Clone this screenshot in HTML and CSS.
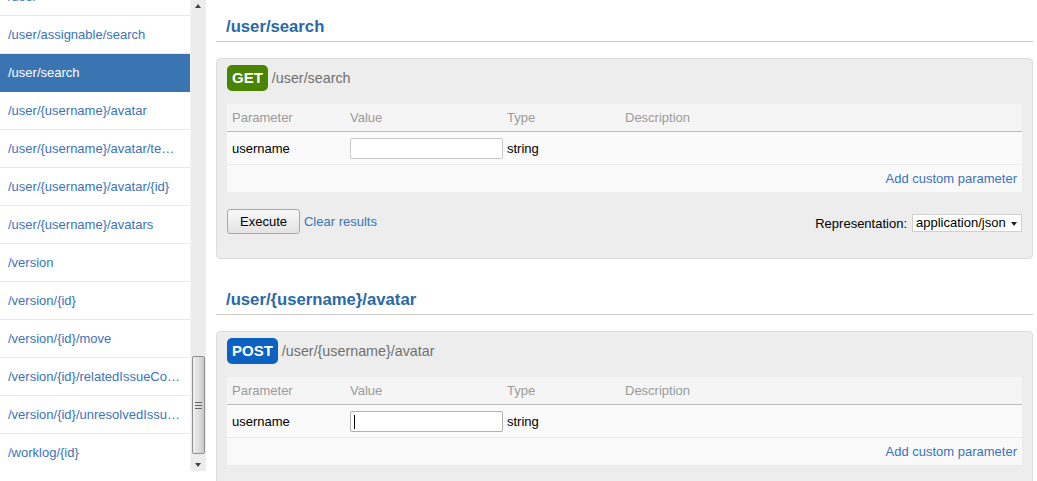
FILE: index.html
```html
<!DOCTYPE html>
<html>
<head>
<meta charset="utf-8">
<title>REST API Browser</title>
<link rel="stylesheet" href="styles.css">
</head>
<body>
<div class="page">
  <aside class="sidebar">
    <nav class="nav">
      <ul class="nav-list">
        <li class="nav-item"><a href="#">/user</a></li>
        <li class="nav-item"><a href="#">/user/assignable/search</a></li>
        <li class="nav-item is-selected"><a href="#">/user/search</a></li>
        <li class="nav-item"><a href="#">/user/{username}/avatar</a></li>
        <li class="nav-item"><a href="#">/user/{username}/avatar/temporary</a></li>
        <li class="nav-item"><a href="#">/user/{username}/avatar/{id}</a></li>
        <li class="nav-item"><a href="#">/user/{username}/avatars</a></li>
        <li class="nav-item"><a href="#">/version</a></li>
        <li class="nav-item"><a href="#">/version/{id}</a></li>
        <li class="nav-item"><a href="#">/version/{id}/move</a></li>
        <li class="nav-item"><a href="#">/version/{id}/relatedIssueCounts</a></li>
        <li class="nav-item"><a href="#">/version/{id}/unresolvedIssueCount</a></li>
        <li class="nav-item"><a href="#">/worklog/{id}</a></li>
      </ul>
    </nav>
    <div class="scrollbar">
      <div class="sb-arrow sb-up"></div>
      <div class="sb-track">
        <div class="sb-thumb"><span class="grip"></span></div>
      </div>
      <div class="sb-arrow sb-down"></div>
    </div>
  </aside>

  <main class="main">
    <section class="resource">
      <h2 class="resource-title">/user/search</h2>
      <div class="method-panel">
        <div class="method-head">
          <span class="badge badge-get">GET</span>
          <span class="method-path">/user/search</span>
        </div>
        <div class="params">
          <div class="prow prow-head">
            <div class="cell">Parameter</div>
            <div class="cell">Value</div>
            <div class="cell">Type</div>
            <div class="cell">Description</div>
          </div>
          <div class="prow prow-param">
            <div class="cell">username</div>
            <div class="cell"><input class="text-input" type="text"></div>
            <div class="cell">string</div>
            <div class="cell"></div>
          </div>
          <div class="prow-custom"><a href="#">Add custom parameter</a></div>
        </div>
        <div class="actions">
          <button class="btn" type="button">Execute</button>
          <a class="clear-link" href="#">Clear results</a>
          <div class="repr">
            <span class="repr-label">Representation:</span>
            <span class="select">application/json</span>
          </div>
        </div>
      </div>
    </section>

    <section class="resource resource-next">
      <h2 class="resource-title">/user/{username}/avatar</h2>
      <div class="method-panel">
        <div class="method-head">
          <span class="badge badge-post">POST</span>
          <span class="method-path">/user/{username}/avatar</span>
        </div>
        <div class="params">
          <div class="prow prow-head">
            <div class="cell">Parameter</div>
            <div class="cell">Value</div>
            <div class="cell">Type</div>
            <div class="cell">Description</div>
          </div>
          <div class="prow prow-param">
            <div class="cell">username</div>
            <div class="cell"><span class="text-input focused"><span class="caret"></span></span></div>
            <div class="cell">string</div>
            <div class="cell"></div>
          </div>
          <div class="prow-custom"><a href="#">Add custom parameter</a></div>
        </div>
        <div class="actions">
          <button class="btn" type="button">Execute</button>
          <a class="clear-link" href="#">Clear results</a>
        </div>
      </div>
    </section>
  </main>
</div>
</body>
</html>
```

FILE: styles.css
```css
html, body {
  margin: 0;
  padding: 0;
  height: 481px;
  overflow: hidden;
  background: #ffffff;
  font-family: "Liberation Sans", Arial, sans-serif;
  font-size: 13px;
  color: #000;
}

a {
  color: #3b73b9;
  text-decoration: none;
}

.page {
  display: flex;
  align-items: flex-start;
}

/* Sidebar */
.sidebar {
  display: flex;
  width: 206px;
  height: 471px;
  flex: none;
}

.nav {
  width: 190px;
  height: 471px;
  overflow: hidden;
}

.nav-list {
  list-style: none;
  margin: -22px 0 0 0;
  padding: 0;
}

.nav-item {
  height: 37px;
  border-bottom: 1px solid #e9e9e9;
}

.nav-item a {
  display: block;
  height: 37px;
  line-height: 37px;
  padding: 0 8px 0 8px;
  white-space: nowrap;
  overflow: hidden;
  text-overflow: ellipsis;
  color: #3b73b9;
}

.nav-item.is-selected {
  background: #3b75b1;
  border-bottom-color: #3b75b1;
}

.nav-item.is-selected a {
  color: #ffffff;
}

/* Fake scrollbar */
.scrollbar {
  width: 16px;
  height: 471px;
  background: #ececec;
  border-left: 1px solid #f4f4f4;
  box-sizing: border-box;
  display: flex;
  flex-direction: column;
}

.sb-arrow {
  height: 17px;
  flex: none;
  position: relative;
}

.sb-up::after,
.sb-down::after {
  content: "";
  position: absolute;
  left: 4px;
  width: 0;
  height: 0;
  border-left: 3.5px solid transparent;
  border-right: 3.5px solid transparent;
}

.sb-up::after {
  top: 4px;
  border-bottom: 4px solid #444;
}

.sb-down::after {
  bottom: 4px;
  border-top: 4px solid #444;
}

.sb-track {
  flex: 1;
  display: flex;
  flex-direction: column;
  justify-content: flex-end;
}

.sb-thumb {
  height: 98px;
  margin: 0 0 0 1px;
  width: 13px;
  box-sizing: border-box;
  border: 1px solid #8f8f8f;
  border-radius: 2px;
  background: linear-gradient(to right, #f0f0f0, #dadada 60%, #c9c9c9);
  display: flex;
  align-items: center;
  justify-content: center;
}

.grip {
  width: 7px;
  height: 5px;
  border-top: 1px solid #666;
  border-bottom: 1px solid #666;
  position: relative;
}

.grip::after {
  content: "";
  position: absolute;
  left: 0;
  right: 0;
  top: 2px;
  border-top: 1px solid #666;
}

/* Main */
.main {
  flex: 1;
  margin: 0 4px 0 10px;
  padding-top: 16px;
}

.resource-next {
  margin-top: 30px;
}

.resource-title {
  margin: 0;
  padding: 1px 10px 4px;
  font-size: 16.7px;
  line-height: 20px;
  font-weight: bold;
  color: #2a68a7;
  border-bottom: 1px solid #cccccc;
}

.method-panel {
  margin-top: 16px;
  background: #ededed;
  border: 1px solid #dcdcdc;
  border-radius: 4px;
  padding: 6px 10px 24px;
}

.method-head {
  display: flex;
  align-items: center;
  height: 26px;
}

.badge {
  display: inline-block;
  height: 26px;
  line-height: 26px;
  padding: 0 5px;
  border-radius: 5px;
  color: #ffffff;
  font-weight: bold;
  font-size: 15px;
}

.badge-get {
  background: #4a8501;
}

.badge-post {
  background: #0c62c1;
}

.method-path {
  margin-left: 4px;
  font-size: 14.3px;
  color: #707070;
}

.params {
  margin-top: 13px;
}

.prow {
  display: grid;
  grid-template-columns: 118px 157px 118px 1fr;
  align-items: center;
}

.cell {
  padding-left: 5px;
  white-space: nowrap;
}

.prow-head {
  height: 27px;
  background: #f5f5f5;
  border-bottom: 1px solid #bdbdbd;
  color: #9a9a9a;
}

.prow-param {
  height: 32px;
  background: #fafafa;
  border-bottom: 1px solid #ebebeb;
}

.text-input {
  display: block;
  box-sizing: border-box;
  width: 153px;
  height: 21px;
  margin: 0;
  padding: 0 3px;
  border: 1px solid #c9c9c9;
  border-radius: 2px;
  background: #ffffff;
  font-family: inherit;
  font-size: 13px;
  outline: none;
  position: relative;
}

.text-input.focused {
  border-color: #b0b0b0;
}

.caret {
  position: absolute;
  left: 3px;
  top: 3px;
  width: 1px;
  height: 14px;
  background: #000;
}

.prow-custom {
  height: 27px;
  line-height: 27px;
  background: #f9f9f9;
  text-align: right;
  padding-right: 5px;
}

.actions {
  margin-top: 17px;
  display: flex;
  align-items: center;
  height: 25px;
}

.btn {
  height: 25px;
  padding: 0 12px;
  font-family: inherit;
  font-size: 13px;
  color: #000;
  border: 1px solid #a9a9a9;
  border-radius: 3px;
  background: linear-gradient(to bottom, #f9f9f9, #e3e3e3);
}

.clear-link {
  margin-left: 4px;
}

.repr {
  margin-left: auto;
  display: flex;
  align-items: center;
  margin-top: 3px;
}

.repr-label {
  margin-right: 5px;
}

.select {
  display: inline-block;
  box-sizing: border-box;
  width: 110px;
  height: 18px;
  line-height: 16px;
  padding-left: 3px;
  border: 1px solid #d0d0d0;
  background: #ffffff;
  position: relative;
}

.select::after {
  content: "";
  position: absolute;
  right: 4px;
  top: 7px;
  border-left: 3.5px solid transparent;
  border-right: 3.5px solid transparent;
  border-top: 4px solid #222;
}
```
